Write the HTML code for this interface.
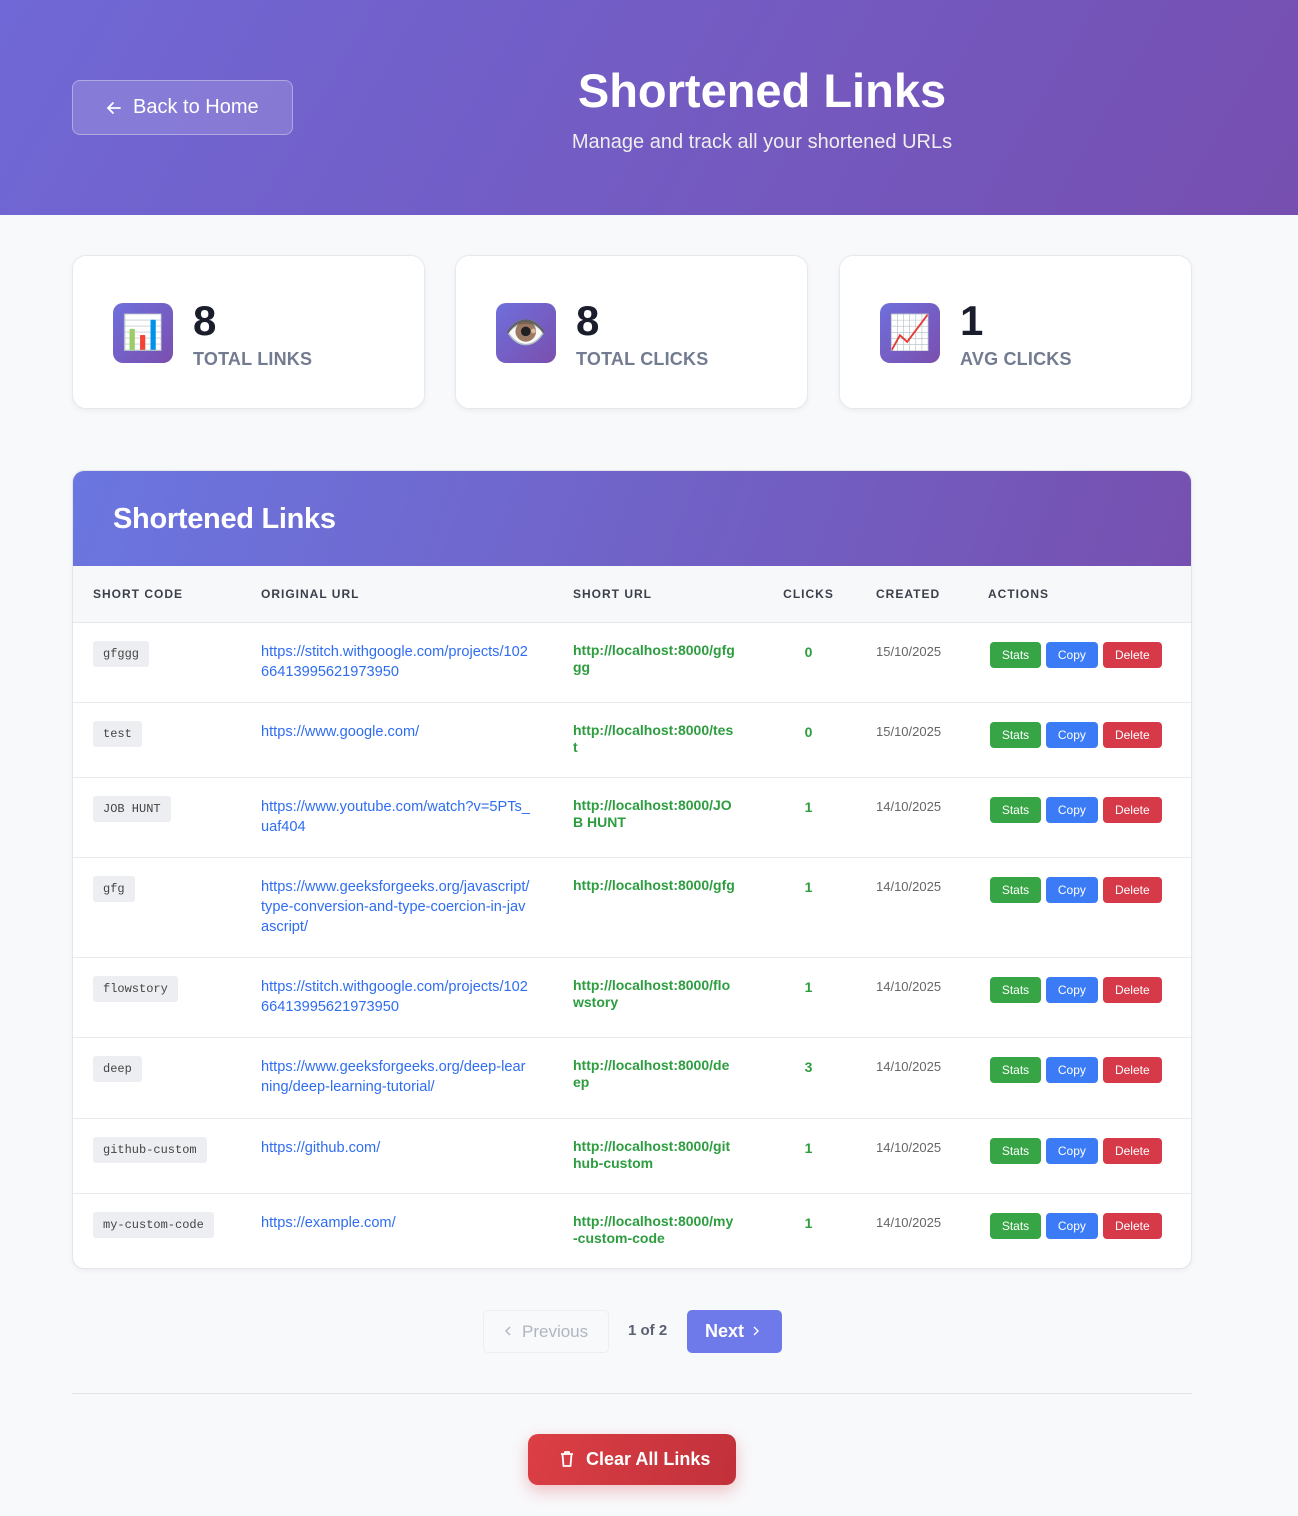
<!DOCTYPE html>
<html><head><meta charset="utf-8"><style>
*{box-sizing:border-box;margin:0;padding:0}
body{width:1298px;height:1516px;background:#f8f9fb;font-family:"Liberation Sans",sans-serif;position:relative;overflow:hidden}
.hero{position:absolute;left:0;top:0;width:1298px;height:215px;background:linear-gradient(120deg,#7068d6,#764fb0)}
.back{position:absolute;left:72px;top:80px;width:221px;height:55px;border:1px solid rgba(255,255,255,.35);background:rgba(255,255,255,.15);border-radius:8px;color:#fff;font-size:20px;display:flex;align-items:center;padding-left:60px}
.back svg{position:absolute;left:33px;top:19px}
.title{position:absolute;left:462px;width:600px;top:63px;text-align:center;color:#fff;font-size:47px;font-weight:bold}
.sub{position:absolute;left:462px;width:600px;top:131px;text-align:center;color:#eee;font-size:20px}
.card{position:absolute;top:255px;width:353px;height:154px;background:#fff;border:1px solid #e6e8ee;border-radius:14px;box-shadow:0 2px 6px rgba(0,0,0,.05)}
.ic{position:absolute;left:40px;top:47px;width:60px;height:60px;border-radius:10px;background:linear-gradient(135deg,#6f6fdc,#7a4fae);display:flex;align-items:center;justify-content:center;font-size:34px}
.num{position:absolute;left:120px;top:41px;font-size:42px;font-weight:bold;color:#1a1d2b}
.lab{position:absolute;left:120px;top:93px;font-size:18px;font-weight:bold;color:#737b91;letter-spacing:.2px}
.tbl{position:absolute;left:72px;top:470px;width:1120px;height:799px;background:#fff;border:1px solid #e2e5ea;border-radius:12px;overflow:hidden;box-shadow:0 2px 6px rgba(0,0,0,.05)}
.th{height:95px;background:linear-gradient(110deg,#6b76e0,#7650b0);color:#fff;font-size:29px;font-weight:bold;padding:32px 40px;letter-spacing:-.3px}
table{border-collapse:collapse;width:1118px;table-layout:fixed}
thead tr{height:56px;background:#f7f8fa}
th{text-align:left;font-size:12px;color:#3a3f4a;letter-spacing:1px;padding:0 20px;border-bottom:1px solid #e4e6ea}
td{vertical-align:top;padding:19px 20px 0;font-size:14px;line-height:20px;border-bottom:1px solid #e8eaee}
tbody tr:last-child td{border-bottom:none}
code{display:inline-block;background:#eceef1;border-radius:3px;padding:3px 10px;font-family:"Liberation Mono",monospace;font-size:12px;color:#444;margin-top:-2px}
td.o{color:#2f6df0;word-break:break-all;font-size:14.6px}
td.s{color:#2d9d3f;font-weight:bold;word-break:break-all;padding-right:26px;font-size:14px;line-height:17px}
.c{color:#2d9d3f;font-weight:bold;text-align:center}
.d{color:#666;font-size:13px}
.b{display:inline-block;height:26px;line-height:26px;color:#fff;font-size:12px;border-radius:4px;text-align:center;margin-right:1px}
.st{background:#37a546;width:51px}.cp{background:#3b7bf5;width:52px}.dl{background:#d63948;width:59px}
td.a{padding-left:22px}
.prev{position:absolute;left:483px;top:1310px;width:126px;height:43px;border:1px solid #eceef2;border-radius:5px;color:#b0b5c0;font-size:17px;padding:11px 0 0 38px}
.pg{position:absolute;left:628px;top:1322px;font-size:15px;font-weight:bold;color:#5a6070}
.next{position:absolute;left:687px;top:1310px;width:95px;height:43px;background:#6f7aea;border-radius:5px;color:#fff;font-size:18px;font-weight:bold;padding:11px 0 0 18px}
.hr{position:absolute;left:72px;top:1393px;width:1120px;height:1px;background:#e3e5e9}
.clear{position:absolute;left:528px;top:1434px;width:208px;height:51px;border-radius:10px;background:linear-gradient(110deg,#dc3f45,#c1303a);color:#fff;font-weight:bold;font-size:18px;padding:15px 0 0 58px;box-shadow:0 6px 16px rgba(220,60,70,.3)}
</style></head><body>
<div class="hero"></div>
<div class="back"><svg width="16" height="16" viewBox="0 0 16 16" fill="none" stroke="#fff" stroke-width="1.8" stroke-linecap="round"><path d="M14 8H2M7 3L2 8l5 5"/></svg>Back to Home</div>
<div class="title">Shortened Links</div>
<div class="sub">Manage and track all your shortened URLs</div>

<div class="card" style="left:72px"><div class="ic">📊</div><div class="num">8</div><div class="lab">TOTAL LINKS</div></div>
<div class="card" style="left:455px"><div class="ic">👁️</div><div class="num">8</div><div class="lab">TOTAL CLICKS</div></div>
<div class="card" style="left:839px"><div class="ic">📈</div><div class="num">1</div><div class="lab">AVG CLICKS</div></div>

<div class="tbl"><div class="th">Shortened Links</div>
<table><colgroup><col style="width:168px"><col style="width:312px"><col style="width:208px"><col style="width:95px"><col style="width:112px"><col style="width:223px"></colgroup>
<thead><tr><th>SHORT CODE</th><th>ORIGINAL URL</th><th>SHORT URL</th><th style="text-align:center">CLICKS</th><th>CREATED</th><th>ACTIONS</th></tr></thead>
<tbody>
<tr style="height:80px"><td><code>gfggg</code></td><td class="o">https://stitch.withgoogle.com/projects/10266413995621973950</td><td class="s">http://localhost:8000/gfggg</td><td class="c">0</td><td class="d">15/10/2025</td><td class="a"><span class="b st">Stats</span> <span class="b cp">Copy</span> <span class="b dl">Delete</span></td></tr>
<tr style="height:75px"><td><code>test</code></td><td class="o">https://www.google.com/</td><td class="s">http://localhost:8000/tes t</td><td class="c">0</td><td class="d">15/10/2025</td><td class="a"><span class="b st">Stats</span> <span class="b cp">Copy</span> <span class="b dl">Delete</span></td></tr>
<tr style="height:80px"><td><code>JOB HUNT</code></td><td class="o">https://www.youtube.com/watch?v=5PTs_uaf404</td><td class="s">http://localhost:8000/JOB HUNT</td><td class="c">1</td><td class="d">14/10/2025</td><td class="a"><span class="b st">Stats</span> <span class="b cp">Copy</span> <span class="b dl">Delete</span></td></tr>
<tr style="height:100px"><td><code>gfg</code></td><td class="o">https://www.geeksforgeeks.org/javascript/type-conversion-and-type-coercion-in-javascript/</td><td class="s">http://localhost:8000/gfg</td><td class="c">1</td><td class="d">14/10/2025</td><td class="a"><span class="b st">Stats</span> <span class="b cp">Copy</span> <span class="b dl">Delete</span></td></tr>
<tr style="height:80px"><td><code>flowstory</code></td><td class="o">https://stitch.withgoogle.com/projects/10266413995621973950</td><td class="s">http://localhost:8000/flowstory</td><td class="c">1</td><td class="d">14/10/2025</td><td class="a"><span class="b st">Stats</span> <span class="b cp">Copy</span> <span class="b dl">Delete</span></td></tr>
<tr style="height:81px"><td><code>deep</code></td><td class="o">https://www.geeksforgeeks.org/deep-learning/deep-learning-tutorial/</td><td class="s">http://localhost:8000/deep</td><td class="c">3</td><td class="d">14/10/2025</td><td class="a"><span class="b st">Stats</span> <span class="b cp">Copy</span> <span class="b dl">Delete</span></td></tr>
<tr style="height:75px"><td><code>github-custom</code></td><td class="o">https://github.com/</td><td class="s">http://localhost:8000/github-custom</td><td class="c">1</td><td class="d">14/10/2025</td><td class="a"><span class="b st">Stats</span> <span class="b cp">Copy</span> <span class="b dl">Delete</span></td></tr>
<tr style="height:75px"><td><code>my-custom-code</code></td><td class="o">https://example.com/</td><td class="s">http://localhost:8000/my-custom-code</td><td class="c">1</td><td class="d">14/10/2025</td><td class="a"><span class="b st">Stats</span> <span class="b cp">Copy</span> <span class="b dl">Delete</span></td></tr>
</tbody></table></div>

<div class="prev">Previous</div>
<svg style="position:absolute;left:504px;top:1326px" width="8" height="10" viewBox="0 0 8 10" fill="none" stroke="#b0b5c0" stroke-width="1.4"><path d="M6 1L2 5l4 4"/></svg>
<div class="pg">1 of 2</div>
<div class="next">Next</div>
<svg style="position:absolute;left:752px;top:1326px" width="8" height="10" viewBox="0 0 8 10" fill="none" stroke="#fff" stroke-width="1.4"><path d="M2 1l4 4-4 4"/></svg>
<div class="hr"></div>
<div class="clear">Clear All Links</div>
<svg style="position:absolute;left:559px;top:1450px" width="16" height="18" viewBox="0 0 16 18" fill="none" stroke="#fff" stroke-width="1.8" stroke-linejoin="round"><path d="M2 4h12M6 4V2h4v2M3.5 4l1 12h7l1-12"/></svg>
</body></html>
